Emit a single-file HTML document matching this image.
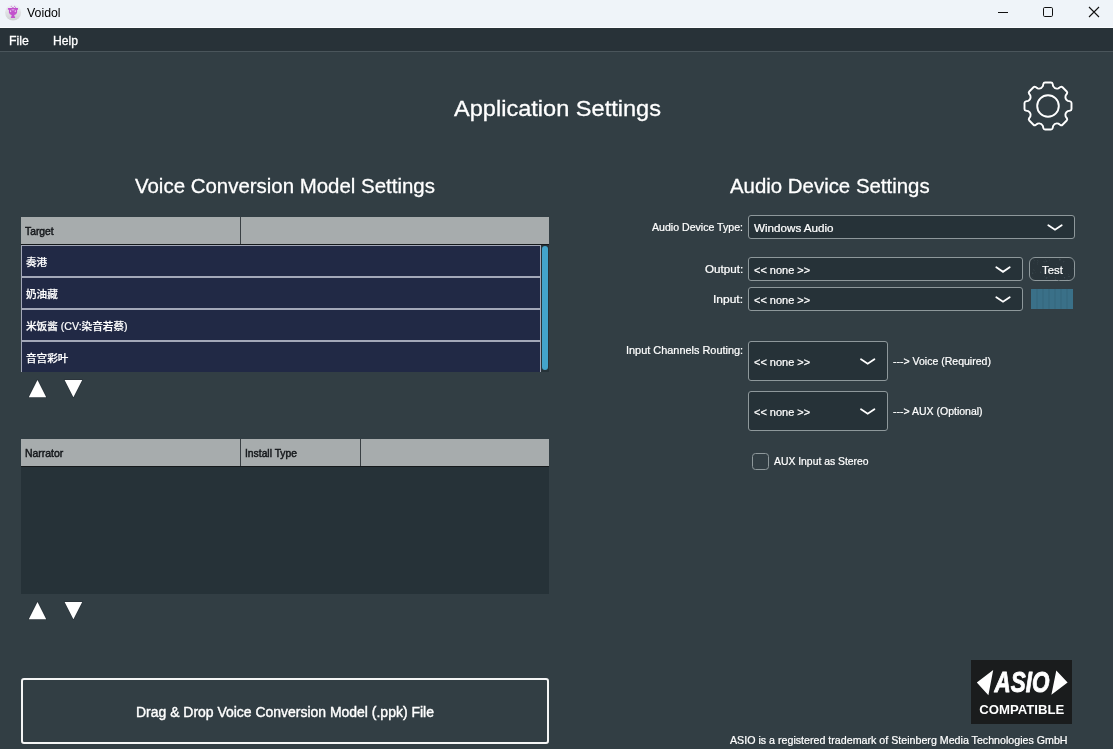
<!DOCTYPE html>
<html lang="zh"><head><meta charset="utf-8"><title>Voidol</title>
<style>
html,body{margin:0;padding:0}
body{width:1113px;height:749px;overflow:hidden;background:#323e44;position:relative;font-family:"Liberation Sans", "Noto Sans CJK SC", sans-serif;}
.abs{position:absolute}
.t{position:absolute;white-space:nowrap;transform-origin:0 50%;display:block}
#titlebar{left:0;top:0;width:1113px;height:28px;background:#eff4f9}
#menubar{left:0;top:28px;width:1113px;height:23px;background:#283238;border-bottom:1px solid #4a555b}
.hdr{background:#a7acad;height:27px;border-bottom:1px solid #15191b}
.colsep{position:absolute;top:0;width:1px;height:27px;background:#3a4044}
#list1{left:21px;top:245px;width:528px;height:127px;overflow:hidden;background:#263238}
.row{position:absolute;left:0;width:520px;height:30px;border:1px solid #a3a8b8;background:#212945;box-sizing:content-box;width:518px}
.rt{position:absolute;left:3.8px;top:1.5px;-webkit-text-stroke:0.2px #fff;transform-origin:0 50%;transform:scaleX(1.035);font-size:10.25px;line-height:30px;color:#fff;white-space:nowrap;font-weight:500}
#list2{left:21px;top:467px;width:528px;height:127px;background:#263238}
.combo{position:absolute;box-sizing:border-box;border:1px solid #8e989b;border-radius:3px;background:#263238}
svg{position:absolute;overflow:visible}
</style></head><body>
<div id="wrap" style="position:absolute;left:0;top:0;width:1113px;height:749px;will-change:transform">
<div class="abs" id="titlebar"></div>
<div class="abs" id="menubar"></div>
<div class="abs" style="left:0;top:27px;width:1113px;height:1px;background:#fafcfe"></div>
<svg id="appicon" style="left:0;top:0" width="28" height="28" viewBox="0 0 28 28">
<defs><linearGradient id="ig" x1="0" y1="0" x2="0" y2="1"><stop offset="0" stop-color="#eef1f6"/><stop offset="0.45" stop-color="#e2e3e6"/><stop offset="1" stop-color="#cfd0d3"/></linearGradient></defs>
<circle cx="13.1" cy="12.5" r="8" fill="url(#ig)"/>
<path d="M7.9 8 H11.6 Q12.9 6.3 14.2 8 H18 V9.7 H17.1 V12.4 Q16.4 14.7 14.3 15 V16.6 H15.1 V18 H10.9 V16.6 H11.6 V15 Q9.5 14.7 8.9 12.4 V9.7 H7.9 Z" fill="#c252cc"/>
<path d="M10 9.8 L11.4 11.6 L10.2 12.2 Z M15.9 9.8 L14.5 11.6 L15.7 12.2 Z M11.6 9.6 H14.4 V10.2 H11.6 Z" fill="#ecdcf1"/>
<circle cx="11.3" cy="6.3" r="0.55" fill="#c966d2"/><circle cx="14.5" cy="6.3" r="0.55" fill="#c966d2"/><circle cx="15.6" cy="7.2" r="0.5" fill="#a95ed0"/>
</svg>
<svg id="winctl" style="left:0;top:0" width="1113" height="28">
<path d="M998 12.5 H1008" stroke="#111" stroke-width="1" fill="none"/>
<rect x="1043.5" y="7.5" width="9" height="9" rx="1.2" fill="none" stroke="#111" stroke-width="1"/>
<path d="M1089 7 L1099 17 M1099 7 L1089 17" stroke="#111" stroke-width="1.1" fill="none"/>
</svg>
<svg id="gear" style="left:1047.5px;top:106.3px" width="1" height="1">
<path d="M-5.13 -19.85 L-4.65 -22.13 Q-4.36 -23.50 -2.96 -23.50 L2.96 -23.50 Q4.36 -23.50 4.65 -22.13 L5.13 -19.85 Q6.89 -16.63 10.40 -17.66 L12.36 -18.93 Q13.54 -19.70 14.53 -18.71 L18.71 -14.53 Q19.70 -13.54 18.93 -12.36 L17.66 -10.40 Q16.63 -6.89 19.85 -5.13 L22.13 -4.65 Q23.50 -4.36 23.50 -2.96 L23.50 2.96 Q23.50 4.36 22.13 4.65 L19.85 5.13 Q16.63 6.89 17.66 10.40 L18.93 12.36 Q19.70 13.54 18.71 14.53 L14.53 18.71 Q13.54 19.70 12.36 18.93 L10.40 17.66 Q6.89 16.63 5.13 19.85 L4.65 22.13 Q4.36 23.50 2.96 23.50 L-2.96 23.50 Q-4.36 23.50 -4.65 22.13 L-5.13 19.85 Q-6.89 16.63 -10.40 17.66 L-12.36 18.93 Q-13.54 19.70 -14.53 18.71 L-18.71 14.53 Q-19.70 13.54 -18.93 12.36 L-17.66 10.40 Q-16.63 6.89 -19.85 5.13 L-22.13 4.65 Q-23.50 4.36 -23.50 2.96 L-23.50 -2.96 Q-23.50 -4.36 -22.13 -4.65 L-19.85 -5.13 Q-16.63 -6.89 -17.66 -10.40 L-18.93 -12.36 Q-19.70 -13.54 -18.71 -14.53 L-14.53 -18.71 Q-13.54 -19.70 -12.36 -18.93 L-10.40 -17.66 Q-6.89 -16.63 -5.13 -19.85 Z" fill="none" stroke="#fff" stroke-width="1.9" stroke-linejoin="round"/>
<circle cx="0" cy="0" r="10.8" fill="none" stroke="#fff" stroke-width="1.9"/>
</svg>

<!-- left tables -->
<div class="abs hdr" style="left:21px;top:217px;width:528px"><div class="colsep" style="left:219px"></div></div>
<div class="abs" id="list1"><div class="row" style="top:0px"><span class="rt" id="r0">奏港</span></div><div class="row" style="top:32px"><span class="rt" id="r1">奶油藏</span></div><div class="row" style="top:64px"><span class="rt" id="r2">米饭酱 (CV:染音若蔡)</span></div><div class="row" style="top:96px"><span class="rt" id="r3">音宫彩叶</span></div></div>
<div class="abs" style="left:542px;top:246px;width:6px;height:124px;border-radius:3px;background:#43a4cb"></div>
<svg style="left:0;top:0" width="560" height="749">
<g fill="#fff" stroke="#262f35" stroke-opacity="0.6" stroke-width="1.6" paint-order="stroke" stroke-linejoin="round">
<path d="M28.8 397.2 L37.5 379.9 L46.2 397.2 Z M64.6 379.9 L82.2 379.9 L73.4 397.2 Z"/>
<path d="M28.8 619.2 L37.5 601.9 L46.2 619.2 Z M64.6 601.9 L82.2 601.9 L73.4 619.2 Z"/></g>
</svg>
<div class="abs hdr" style="left:21px;top:439px;width:528px"><div class="colsep" style="left:219px"></div><div class="colsep" style="left:339px"></div></div>
<div class="abs" id="list2"></div>
<div class="abs" style="left:21px;top:678px;width:528px;height:66px;box-sizing:border-box;border:2px solid #f4f5f5;border-radius:3px"></div>

<!-- right -->
<div class="combo" style="left:748px;top:215px;width:327px;height:24px"></div>
<div class="combo" style="left:748px;top:257px;width:275px;height:24px"></div>
<div class="combo" style="left:748px;top:287px;width:275px;height:24px"></div>
<div class="combo" style="left:748px;top:341px;width:140px;height:40px"></div>
<div class="combo" style="left:748px;top:391px;width:140px;height:40px"></div>
<div class="combo" style="left:1029px;top:257px;width:46px;height:24px;border-radius:6px;background:#29343a"></div>
<svg style="left:1031px;top:289px" width="42" height="20"><rect x="0" y="0" width="42" height="20" fill="#3a7088"/><rect x="5.5" y="0" width="1" height="20" fill="#35667d"/><rect x="11.5" y="0" width="1" height="20" fill="#35667d"/><rect x="17.5" y="0" width="1" height="20" fill="#35667d"/><rect x="23.5" y="0" width="1" height="20" fill="#35667d"/><rect x="29.5" y="0" width="1" height="20" fill="#35667d"/><rect x="35.5" y="0" width="1" height="20" fill="#35667d"/></svg>
<div class="abs" style="left:751.5px;top:452.5px;width:17.5px;height:17.5px;box-sizing:border-box;border:1px solid #8e989b;border-radius:3.5px"></div>
<svg style="left:0;top:0" width="1113" height="749">
<g fill="#46535a" opacity="0.75"><circle cx="1044.9" cy="261.8" r="0.58"/><circle cx="1034.1" cy="270.3" r="0.48"/><circle cx="1033.5" cy="269.7" r="0.36"/><circle cx="1049.6" cy="260.0" r="0.38"/><circle cx="1049.3" cy="276.7" r="0.39"/><circle cx="1040.6" cy="272.3" r="0.68"/><circle cx="1073.0" cy="259.5" r="0.65"/><circle cx="1043.5" cy="261.7" r="0.39"/><circle cx="1044.3" cy="276.5" r="0.41"/><circle cx="1033.7" cy="259.8" r="0.42"/><circle cx="1065.2" cy="273.9" r="0.44"/><circle cx="1068.6" cy="274.5" r="0.45"/><circle cx="1073.1" cy="261.1" r="0.50"/><circle cx="1063.6" cy="261.8" r="0.52"/><circle cx="1032.7" cy="273.2" r="0.62"/><circle cx="1055.6" cy="277.8" r="0.46"/><circle cx="1067.1" cy="279.3" r="0.52"/><circle cx="1059.6" cy="259.8" r="0.60"/><circle cx="1058.8" cy="280.3" r="0.64"/><circle cx="1059.8" cy="259.0" r="0.51"/><circle cx="1038.2" cy="261.1" r="0.37"/><circle cx="1064.0" cy="261.3" r="0.44"/><circle cx="1047.8" cy="277.7" r="0.38"/><circle cx="1069.0" cy="276.5" r="0.65"/><circle cx="1046.4" cy="278.0" r="0.69"/><circle cx="1037.5" cy="262.4" r="0.43"/><circle cx="1056.3" cy="264.3" r="0.35"/><circle cx="1055.4" cy="279.5" r="0.59"/><circle cx="1060.1" cy="259.7" r="0.66"/><circle cx="1064.5" cy="277.7" r="0.63"/><circle cx="1035.5" cy="272.5" r="0.37"/><circle cx="1033.9" cy="263.1" r="0.41"/><circle cx="1045.6" cy="259.7" r="0.35"/><circle cx="1037.5" cy="260.7" r="0.48"/><circle cx="1032.1" cy="277.7" r="0.56"/><circle cx="1037.4" cy="264.0" r="0.47"/><circle cx="1046.7" cy="261.2" r="0.65"/><circle cx="1073.7" cy="268.8" r="0.52"/><circle cx="1034.7" cy="260.7" r="0.47"/></g>
<path d="M1048.30 225.20 L1055.00 229.70 L1061.70 225.20" fill="none" stroke="#fff" stroke-width="1.8" stroke-linecap="round" stroke-linejoin="miter"/><path d="M996.30 267.30 L1003.00 271.80 L1009.70 267.30" fill="none" stroke="#fff" stroke-width="1.8" stroke-linecap="round" stroke-linejoin="miter"/><path d="M996.30 297.20 L1003.00 301.70 L1009.70 297.20" fill="none" stroke="#fff" stroke-width="1.8" stroke-linecap="round" stroke-linejoin="miter"/><path d="M861.00 359.20 L867.70 363.70 L874.40 359.20" fill="none" stroke="#fff" stroke-width="1.8" stroke-linecap="round" stroke-linejoin="miter"/><path d="M861.00 409.20 L867.70 413.70 L874.40 409.20" fill="none" stroke="#fff" stroke-width="1.8" stroke-linecap="round" stroke-linejoin="miter"/>
</svg>
<!-- ASIO -->
<div class="abs" style="left:971px;top:660px;width:101px;height:64px;background:#1a1c1d"></div>
<svg style="left:0;top:0" width="1113" height="749">
<path d="M976.8 682.4 L993.2 669.9 L988.4 695.2 Z M1056.3 670.4 L1067.6 682.4 L1051.4 694.8 Z" fill="#fff"/>
<text x="994.6" y="691.6" font-family='"Liberation Sans",sans-serif' font-weight="700" font-style="italic" font-size="29.6" fill="#fff" stroke="#fff" stroke-width="0.9" stroke-linejoin="round" textLength="55" lengthAdjust="spacingAndGlyphs">ASIO</text>
<text x="979.3" y="713.8" font-family='"Liberation Sans",sans-serif' font-weight="700" font-size="13.6" fill="#fff" textLength="85" lengthAdjust="spacingAndGlyphs">COMPATIBLE</text>
</svg>
<span class="t" id="ttl" style="left:27px;top:5.00px;font-size:12px;line-height:17px;color:#000;font-weight:400;transform:scaleX(1.0274);">Voidol</span>
<span class="t" id="file" style="left:8.7px;top:32.00px;font-size:12.6px;line-height:18px;color:#fff;font-weight:400;transform:scaleX(0.9755);-webkit-text-stroke:0.3px #fff;">File</span>
<span class="t" id="help" style="left:53.0px;top:32.00px;font-size:12.6px;line-height:18px;color:#fff;font-weight:400;transform:scaleX(0.9650);-webkit-text-stroke:0.3px #fff;">Help</span>
<span class="t" id="app" style="left:454px;top:92.00px;font-size:22.8px;line-height:32px;color:#fff;font-weight:400;transform:scaleX(1.0338);-webkit-text-stroke:0.3px #fff;">Application Settings</span>
<span class="t" id="vcm" style="left:134.8px;top:171.00px;font-size:21px;line-height:29px;color:#fff;font-weight:400;transform:scaleX(0.9732);-webkit-text-stroke:0.3px #fff;">Voice Conversion Model Settings</span>
<span class="t" id="ads" style="left:730px;top:171.00px;font-size:21px;line-height:29px;color:#fff;font-weight:400;transform:scaleX(0.9715);-webkit-text-stroke:0.3px #fff;">Audio Device Settings</span>
<span class="t" id="tgt" style="left:25.3px;top:224.00px;font-size:10.5px;line-height:15px;color:#14171a;font-weight:400;transform:scaleX(0.9833);-webkit-text-stroke:0.45px #14171a;">Target</span>
<span class="t" id="nar" style="left:25.2px;top:446.00px;font-size:10.5px;line-height:15px;color:#14171a;font-weight:400;transform:scaleX(0.9944);-webkit-text-stroke:0.45px #14171a;">Narrator</span>
<span class="t" id="ins" style="left:245px;top:446.00px;font-size:10.5px;line-height:15px;color:#14171a;font-weight:400;transform:scaleX(0.9826);-webkit-text-stroke:0.45px #14171a;">Install Type</span>
<span class="t" id="drop" style="left:136.4px;top:702.00px;font-size:14px;line-height:20px;color:#fff;font-weight:400;transform:scaleX(0.9970);-webkit-text-stroke:0.4px #fff;">Drag &amp; Drop Voice Conversion Model (.ppk) File</span>
<span class="t" id="adt" style="left:652.2px;top:220.00px;font-size:11px;line-height:15px;color:#fff;font-weight:400;transform:scaleX(0.9622);-webkit-text-stroke:0.22px #fff;">Audio Device Type:</span>
<span class="t" id="out" style="left:705px;top:262.00px;font-size:11px;line-height:15px;color:#fff;font-weight:400;transform:scaleX(1.0588);-webkit-text-stroke:0.22px #fff;">Output:</span>
<span class="t" id="inp" style="left:713.2px;top:292.00px;font-size:11px;line-height:15px;color:#fff;font-weight:400;transform:scaleX(1.0897);-webkit-text-stroke:0.22px #fff;">Input:</span>
<span class="t" id="icr" style="left:626.3px;top:343.00px;font-size:11px;line-height:15px;color:#fff;font-weight:400;transform:scaleX(0.9921);-webkit-text-stroke:0.22px #fff;">Input Channels Routing:</span>
<span class="t" id="wa" style="left:754px;top:221.00px;font-size:11px;line-height:15px;color:#fff;font-weight:400;transform:scaleX(1.0582);-webkit-text-stroke:0.22px #fff;">Windows Audio</span>
<span class="t" id="n1" style="left:754px;top:263.00px;font-size:11px;line-height:15px;color:#fff;font-weight:400;transform:scaleX(0.9968);-webkit-text-stroke:0.22px #fff;">&lt;&lt; none &gt;&gt;</span>
<span class="t" id="n2" style="left:754px;top:293.00px;font-size:11px;line-height:15px;color:#fff;font-weight:400;transform:scaleX(0.9968);-webkit-text-stroke:0.22px #fff;">&lt;&lt; none &gt;&gt;</span>
<span class="t" id="n3" style="left:754px;top:355.00px;font-size:11px;line-height:15px;color:#fff;font-weight:400;transform:scaleX(0.9968);-webkit-text-stroke:0.22px #fff;">&lt;&lt; none &gt;&gt;</span>
<span class="t" id="n4" style="left:754px;top:405.00px;font-size:11px;line-height:15px;color:#fff;font-weight:400;transform:scaleX(0.9968);-webkit-text-stroke:0.22px #fff;">&lt;&lt; none &gt;&gt;</span>
<span class="t" id="test" style="left:1042px;top:262.00px;font-size:11.2px;line-height:16px;color:#fff;font-weight:400;transform:scaleX(1.0131);-webkit-text-stroke:0.22px #fff;">Test</span>
<span class="t" id="vr" style="left:892.5px;top:354.00px;font-size:11px;line-height:15px;color:#fff;font-weight:400;transform:scaleX(0.9560);-webkit-text-stroke:0.22px #fff;">---&gt; Voice (Required)</span>
<span class="t" id="ao" style="left:892.5px;top:404.00px;font-size:11px;line-height:15px;color:#fff;font-weight:400;transform:scaleX(0.9548);-webkit-text-stroke:0.22px #fff;">---&gt; AUX (Optional)</span>
<span class="t" id="aux" style="left:774.2px;top:454.00px;font-size:11px;line-height:15px;color:#fff;font-weight:400;transform:scaleX(0.9433);-webkit-text-stroke:0.22px #fff;">AUX Input as Stereo</span>
<span class="t" id="foot" style="left:729.7px;top:733.00px;font-size:11px;line-height:15px;color:#fff;font-weight:400;transform:scaleX(0.9692);-webkit-text-stroke:0.22px #fff;">ASIO is a registered trademark of Steinberg Media Technologies GmbH</span>
</div>
</body></html>
